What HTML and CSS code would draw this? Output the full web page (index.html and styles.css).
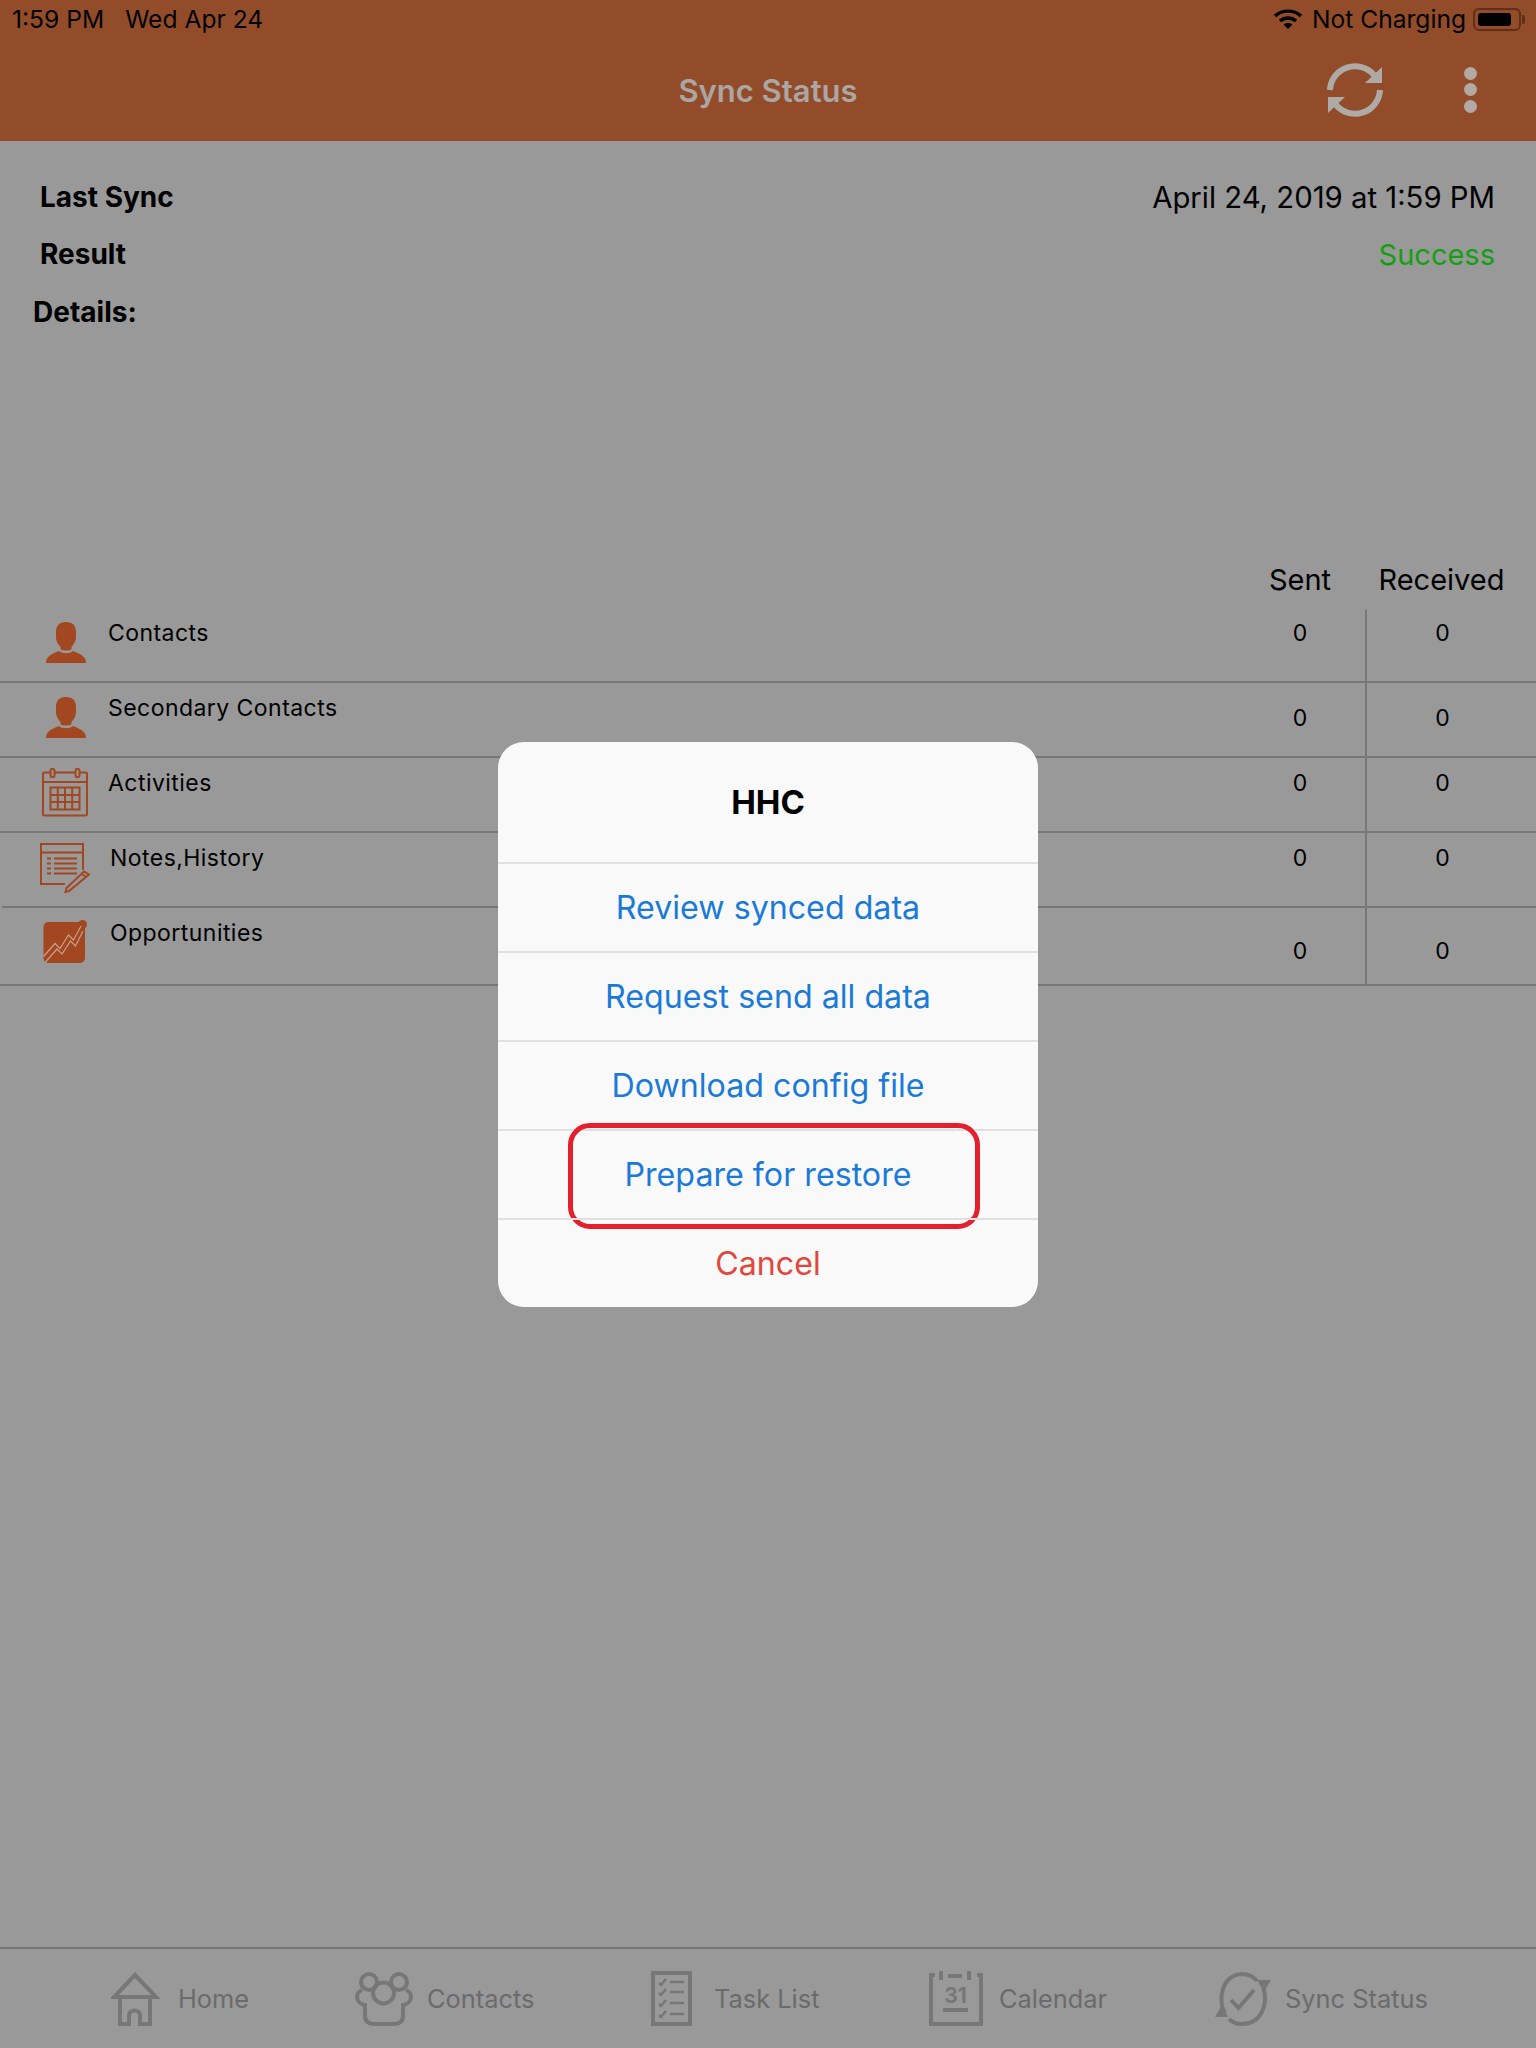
FILE: index.html
```html
<!DOCTYPE html>
<html lang="en">
<head>
  <meta charset="UTF-8">
  <meta name="viewport" content="width=device-width, initial-scale=1.0">
  <title>Sync Status</title>
  <link rel="stylesheet" href="styles.css">
</head>
<body>
  <div class="app">
    <header class="app-header">
      <div class="status-bar">
        <span class="status-time">1:59 PM</span>
        <span class="status-date">Wed Apr 24</span>
        <span class="status-right">
          <svg class="wifi" viewBox="0 0 28 20">
            <path d="M1 7 C8 0.5 20 0.5 27 7" fill="none" stroke="#000" stroke-width="3.4"/>
            <path d="M6 12 C10.5 8 17.5 8 22 12" fill="none" stroke="#000" stroke-width="3.4"/>
            <path d="M14 20 L9.5 15.5 C12 13.5 16 13.5 18.5 15.5 Z" fill="#000"/>
          </svg>
          <span>Not Charging</span>
          <span class="battery"><span class="battery-level"></span></span>
        </span>
      </div>
      <div class="title-bar">
        <div class="title-side"></div>
        <h1>Sync Status</h1>
        <div class="title-side title-actions">
          <svg class="refresh" viewBox="0 0 56 56">
            <path d="M3 28 A25 25 0 0 1 47 13" fill="none" stroke="#aeaaa6" stroke-width="6"/>
            <path d="M55 5 V21 H38 Z" fill="#aeaaa6"/>
            <path d="M53 28 A25 25 0 0 1 9 43" fill="none" stroke="#aeaaa6" stroke-width="6"/>
            <path d="M1 51 V35 H18 Z" fill="#aeaaa6"/>
          </svg>
          <div class="more">
            <span></span><span></span><span></span>
          </div>
        </div>
      </div>
    </header>

    <section class="summary">
      <div class="summary-row">
        <span class="summary-label">Last Sync</span>
        <span>April 24, 2019 at 1:59 PM</span>
      </div>
      <div class="summary-row">
        <span class="summary-label">Result</span>
        <span class="success">Success</span>
      </div>
      <div class="details-label">Details:</div>
    </section>

    <section class="sync-table">
      <div class="table-head">
        <span class="head-sent">Sent</span>
        <span class="head-received">Received</span>
      </div>

      <div class="row row-first">
        <svg class="row-icon" viewBox="0 0 50 50">
          <path class="fill" d="M26 4 C19 4 16 8 16 14 V19 C16 24 19 27 20.5 29 V31 C22 33 30 33 31.5 31 V29 C33 27 36 24 36 19 V14 C36 8 33 4 26 4 Z"/>
          <path class="fill" d="M6 45 C6 38 12 36 19 33 C22 36 30 36 33 33 C40 36 46 38 46 45 Z"/>
        </svg>
        <div class="row-label">Contacts</div>
        <div class="count">0</div>
        <div class="count count-received">0</div>
      </div>

      <div class="row row-mid">
        <svg class="row-icon" viewBox="0 0 50 50">
          <path class="fill" d="M26 4 C19 4 16 8 16 14 V19 C16 24 19 27 20.5 29 V31 C22 33 30 33 31.5 31 V29 C33 27 36 24 36 19 V14 C36 8 33 4 26 4 Z"/>
          <path class="fill" d="M6 45 C6 38 12 36 19 33 C22 36 30 36 33 33 C40 36 46 38 46 45 Z"/>
        </svg>
        <div class="row-label">Secondary Contacts</div>
        <div class="count">0</div>
        <div class="count count-received">0</div>
      </div>

      <div class="row">
        <svg class="row-icon" viewBox="0 0 50 50">
          <rect class="line" x="3" y="4.5" width="44" height="43" rx="1.5"/>
          <path class="line" d="M3 14 H47"/>
          <rect class="line paper" x="10.5" y="0.8" width="4" height="8.5" rx="2"/>
          <rect class="line paper" x="35.5" y="0.8" width="4" height="8.5" rx="2"/>
          <path class="line" d="M10.5 19.5 H39.5 V41.5 H10.5 Z M10.5 27 H39.5 M10.5 34 H39.5 M17.8 19.5 V41.5 M25 19.5 V41.5 M32.2 19.5 V41.5"/>
        </svg>
        <div class="row-label">Activities</div>
        <div class="count">0</div>
        <div class="count count-received">0</div>
      </div>

      <div class="row row-notes">
        <svg class="row-icon" viewBox="0 0 50 50">
          <path class="line" d="M43 27 V1 H1 V41 H25 M1 9.5 H43"/>
          <path class="line" d="M7 15.5 H11 M14 15.5 H37 M7 20.5 H11 M14 20.5 H37 M7 25.5 H11 M14 25.5 H37 M7 30.5 H11 M14 30.5 H37"/>
          <path class="line" d="M29 48 L25.5 49 L26.5 45 L44 28.5 L49 31.5 Z M41.5 31 L46.5 34"/>
        </svg>
        <div class="row-label">Notes,History</div>
        <div class="count">0</div>
        <div class="count count-received">0</div>
      </div>

      <div class="row row-last">
        <svg class="row-icon" viewBox="0 0 50 50">
          <rect class="fill" x="3.5" y="4" width="41.5" height="41" rx="5"/>
          <circle class="fill" cx="42.5" cy="6.5" r="4.5"/>
          <path class="spark" d="M3.5 38.5 L15 25.5 L20 30.5 L28.5 17 L33.5 22 L41 8"/>
          <path class="spark" d="M5.5 44 L17 31 L22 36 L30.5 23 L35.5 28 L43 13"/>
        </svg>
        <div class="row-label">Opportunities</div>
        <div class="count">0</div>
        <div class="count count-received">0</div>
      </div>
    </section>

    <nav class="tab-bar">
      <div class="tab tab-home">
        <svg class="tab-icon" width="53" height="54" viewBox="0 0 53 54">
          <path d="M24 3 L3 25 H45 Z M9 25 V52 H18 V43 C18 37 29 37 29 43 V52 H39 V25"/>
        </svg>
        <span>Home</span>
      </div>
      <div class="tab tab-contacts">
        <svg class="tab-icon" width="58" height="54" viewBox="0 0 58 54">
          <circle cx="14" cy="10" r="8"/>
          <circle cx="44" cy="10" r="8"/>
          <circle cx="28.5" cy="21" r="10.5"/>
          <path d="M7 18 C0 21 0 31 10 33 V44 C10 50 14 52 20 52 H38 C44 52 48 50 48 44 V33 C58 31 58 21 51 18"/>
        </svg>
        <span>Contacts</span>
      </div>
      <div class="tab tab-tasks">
        <svg class="tab-icon" width="49" height="55" viewBox="0 0 49 55">
          <rect x="2" y="2" width="37" height="51"/>
          <path class="thin" d="M8 12 L10 14 L15 8 M19 11 H33 M8 22 L10 24 L15 18 M19 21 H33 M8 33 L10 35 L15 29 M19 32 H33 M8 44 L10 46 L15 40 M19 43 H33"/>
        </svg>
        <span>Task List</span>
      </div>
      <div class="tab tab-calendar">
        <svg class="tab-icon" width="56" height="55" viewBox="0 0 56 55">
          <path d="M6 4 H2 V53 H52 V4 H48 M12 0 V9 M40 0 V9 M19 5 H33"/>
          <text class="cal-day" x="26.5" y="32">31</text>
          <path d="M14 39 H39"/>
        </svg>
        <span>Calendar</span>
      </div>
      <div class="tab tab-sync">
        <svg class="tab-icon" width="56" height="54" viewBox="0 0 56 54">
          <path d="M10 41 C2 28 7 3 27 2 C33 2 38 4 42 9"/>
          <path d="M48 15 C54 32 46 52 27 52 C21 52 17 50 14 47"/>
          <path class="solid" d="M56 8 L42 8 L49 20 Z M0 45 L13 45 L7 33 Z"/>
          <path d="M16 28 L23.5 36 L39 18"/>
        </svg>
        <span>Sync Status</span>
      </div>
    </nav>

    <div class="dialog-layer">
      <div class="dialog">
        <div class="dialog-title">HHC</div>
        <div class="dialog-action">Review synced data</div>
        <div class="dialog-action">Request send all data</div>
        <div class="dialog-action">Download config file</div>
        <div class="dialog-action">Prepare for restore<span class="highlight"></span></div>
        <div class="dialog-action dialog-cancel">Cancel</div>
      </div>
    </div>
  </div>
</body>
</html>
```

FILE: styles.css
```css
* {
  box-sizing: border-box;
}

body {
  margin: 0;
  font-family: Inter, 'Liberation Sans', sans-serif;
  color: #000;
  background: #999;
}

.app {
  position: relative;
  display: flex;
  flex-direction: column;
  height: 2048px;
  background: #999;
  overflow: hidden;
}

/* header */
.app-header {
  height: 141px;
  background: #934c2a;
}

.status-bar {
  display: flex;
  align-items: center;
  height: 38px;
  padding: 0 15px 0 12px;
  font-size: 24.6px;
}

.status-date {
  margin-left: 21px;
}

.status-right {
  display: flex;
  align-items: center;
  margin-left: auto;
}

.wifi {
  width: 28px;
  height: 20px;
  margin-right: 10px;
}

.battery {
  position: relative;
  display: block;
  width: 48px;
  height: 23px;
  margin-left: 7px;
  padding: 3px;
  border: 2px solid #5e301b;
  border-radius: 6px;
}

.battery::after {
  content: '';
  position: absolute;
  right: -6px;
  top: 5px;
  width: 3px;
  height: 9px;
  background: #5e301b;
  border-radius: 0 2px 2px 0;
}

.battery-level {
  display: block;
  width: 33px;
  height: 100%;
  background: #000;
  border-radius: 3px;
}

.title-bar {
  display: flex;
  align-items: center;
  height: 103px;
}

.title-bar h1 {
  margin: 0;
  padding-top: 2px;
  font-size: 31px;
  font-weight: 600;
  color: #aaa6a4;
}

.title-side {
  flex: 1;
}

.title-actions {
  display: flex;
  align-items: center;
  justify-content: flex-end;
}

.refresh {
  width: 56px;
  height: 56px;
  margin-right: 81px;
}

.more {
  display: flex;
  flex-direction: column;
  gap: 3.5px;
  margin-right: 59px;
}

.more span {
  width: 13px;
  height: 13px;
  border-radius: 50%;
  background: #b3a9a4;
}

/* summary */
.summary {
  height: 425px;
  padding: 37px 41px 0 40px;
  font-size: 29.3px;
}

.summary-row {
  display: flex;
  justify-content: space-between;
  align-items: center;
  height: 38px;
  margin-bottom: 19px;
}

.summary-label,
.details-label {
  font-weight: 700;
  font-size: 28px;
}

.success {
  color: #12a012;
  font-size: 29px;
}

.details-label {
  margin-left: -7px;
  padding-top: 1px;
  line-height: 38px;
}

/* table */
.table-head {
  display: grid;
  grid-template-columns: 1fr 130px 153px;
  height: 42px;
  padding-right: 18px;
  font-size: 29px;
  line-height: 28px;
  text-align: center;
}

.head-sent {
  grid-column: 2;
}

.row {
  display: grid;
  grid-template-columns: 105px 1fr 130px 153px;
  height: 75px;
  padding-right: 18px;
  border-bottom: 2px solid #777;
}

.row-first .count-received {
  margin-top: 2px;
  padding-top: 8px;
}

.row-mid .count {
  padding-top: 20px;
}

.row-notes {
  margin-left: 2px;
}

.row-notes .row-icon {
  margin-left: 38px;
}

.row-last {
  grid-template-columns: 107px 1fr 130px 153px;
  height: 78px;
}

.row-last .count {
  padding-top: 28px;
}

.row-icon {
  width: 50px;
  height: 50px;
  margin: 10px 0 0 40px;
}

.row-icon .fill {
  fill: #a2471f;
}

.row-icon .line {
  fill: none;
  stroke: #a2471f;
  stroke-width: 2;
}

.row-icon .paper {
  fill: #999;
}

.row-icon .spark {
  fill: none;
  stroke: #c9a08c;
  stroke-width: 1.2;
}

.row-label {
  padding: 10px 0 0 3px;
  font-size: 23px;
  line-height: 30px;
  letter-spacing: 0.45px;
}

.count {
  padding-top: 10px;
  font-size: 23px;
  line-height: 30px;
  text-align: center;
}

.count-received {
  border-left: 2px solid #777;
}

/* tab bar */
.tab-bar {
  display: flex;
  align-items: center;
  height: 101px;
  margin-top: auto;
  padding: 0 0 0 111px;
  border-top: 2px solid #777;
  font-size: 25.4px;
  color: #6b6b6b;
}

.tab {
  display: flex;
  align-items: center;
  gap: 14px;
}

.tab-home {
  width: 244px;
}

.tab-contacts {
  width: 296px;
}

.tab-tasks {
  width: 278px;
}

.tab-calendar {
  width: 286px;
}

.tab-icon {
  fill: none;
  stroke: #777;
  stroke-width: 4;
}

.tab-icon .thin {
  stroke-width: 2.5;
}

.tab-icon .solid {
  fill: #777;
  stroke: none;
}

.tab-icon .cal-day {
  fill: #777;
  stroke: none;
  font-size: 21px;
  font-weight: 700;
  text-anchor: middle;
}

/* alert */
.dialog-layer {
  position: absolute;
  inset: 0;
  display: flex;
  align-items: center;
  justify-content: center;
}

.dialog {
  width: 540px;
  background: #f9f9fa;
  border-radius: 26px;
}

.dialog-title {
  height: 120px;
  font-size: 33px;
  font-weight: 700;
  line-height: 120px;
  text-align: center;
}

.dialog-action {
  position: relative;
  height: 89px;
  border-top: 2px solid #e0e0e3;
  font-size: 32.2px;
  line-height: 87px;
  text-align: center;
  color: #1a7ad9;
}

.dialog-cancel {
  color: #e2463c;
}

.highlight {
  position: absolute;
  left: 70px;
  top: -8px;
  width: 412px;
  height: 106px;
  border: 5px solid #e3202c;
  border-radius: 22px;
}
```
